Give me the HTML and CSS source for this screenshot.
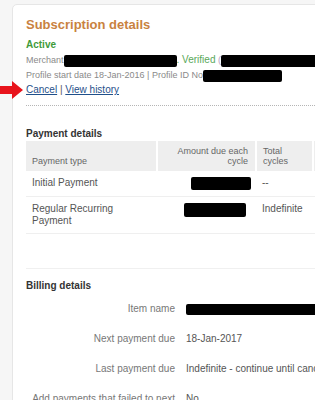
FILE: index.html
```html
<!DOCTYPE html>
<html>
<head>
<meta charset="utf-8">
<link rel="stylesheet" href="styles.css">
</head>
<body>
<div class="page">
  <svg class="arrow" width="24" height="20" viewBox="0 0 24 20"><path d="M0 6 H12 V1 L23 10 L12 19 V14 H0 Z" fill="#e8141c"/></svg>
  <div class="card">
    <h1 class="title">Subscription details</h1>
    <div class="status">Active</div>
    <div class="meta">Merchant<span class="redact r-merchant"></span><span class="green">. Verified</span> <span class="paren">(</span><span class="redact r-verified"></span></div>
    <div class="meta">Profile start date 18-Jan-2016 | Profile ID No<span class="redact r-profile"></span></div>
    <div class="links"><a href="#" class="link">Cancel</a> | <a href="#" class="link">View history</a></div>

    <div class="section-payment">
      <h2 class="heading">Payment details</h2>
      <table class="ptable">
        <colgroup>
          <col class="c1"><col class="c2"><col class="c3"><col class="c4">
        </colgroup>
        <thead>
          <tr>
            <th class="th-left">Payment type</th>
            <th class="th-right">Amount due each cycle</th>
            <th class="th-left">Total cycles</th>
            <th class="th-left"></th>
          </tr>
        </thead>
        <tbody>
          <tr>
            <td>Initial Payment</td>
            <td class="td-right"><span class="redact r-amt1"></span></td>
            <td>--</td>
            <td></td>
          </tr>
          <tr>
            <td>Regular Recurring<br>Payment</td>
            <td class="td-right"><span class="redact r-amt2"></span></td>
            <td>Indefinite</td>
            <td></td>
          </tr>
        </tbody>
      </table>
    </div>

    <div class="section-billing">
      <h2 class="heading">Billing details</h2>
      <div class="bgrid">
        <div class="blabel">Item name</div><div class="bvalue"><span class="redact r-item"></span></div>
        <div class="blabel">Next payment due</div><div class="bvalue">18-Jan-2017</div>
        <div class="blabel">Last payment due</div><div class="bvalue nowrap">Indefinite - continue until cancelled</div>
        <div class="blabel">Add payments that failed to next billing</div><div class="bvalue">No</div>
      </div>
    </div>
  </div>
</div>
</body>
</html>
```

FILE: styles.css
```css
html, body {
  margin: 0;
  padding: 0;
}
body {
  background: #f6f6f6;
  font-family: "Liberation Sans", Arial, sans-serif;
  overflow: hidden;
  width: 315px;
  height: 400px;
}
.page {
  position: relative;
  width: 315px;
  height: 400px;
  overflow: hidden;
  padding-top: 4px;
  box-sizing: border-box;
}
.arrow {
  position: absolute;
  left: 0;
  top: 80px;
}
.card {
  margin-left: 12px;
  width: 420px;
  min-height: 500px;
  background: #fff;
  border: 1px solid #e6e6e6;
  border-radius: 5px;
  padding: 12px 0 0 13px;
  box-sizing: border-box;
}
.title {
  margin: 0;
  font-size: 13px;
  line-height: 16px;
  font-weight: bold;
  color: #c9823f;
}
.status {
  margin-top: 5px;
  font-size: 10px;
  line-height: 14px;
  font-weight: bold;
  color: #3f9b3a;
}
.meta {
  font-size: 9px;
  line-height: 15px;
  color: #8a8a8a;
  white-space: nowrap;
}
.green {
  color: #5aa85a;
  font-size: 10px;
}
.paren {
  color: #b9a0c0;
}
.redact {
  display: inline-block;
  background: #000;
  vertical-align: middle;
  border-radius: 2px;
}
.r-merchant { width: 113px; height: 12px; }
.r-verified { width: 100px; height: 12px; }
.r-profile { width: 79px; height: 12px; }
.r-amt1 { width: 60px; height: 13px; }
.r-amt2 { width: 62px; height: 14px; margin-right: 5px; }
.r-item { width: 140px; height: 11px; }
.links {
  font-size: 10px;
  line-height: 14px;
  color: #555;
  padding-bottom: 8px;
  border-bottom: 1px dotted #b5b5b5;
}
.link {
  color: #1f4f8a;
  text-decoration: underline;
}
.section-payment {
  margin-top: 21px;
}
.heading {
  margin: 0;
  font-size: 10px;
  line-height: 14px;
  font-weight: bold;
  color: #333;
}
.ptable {
  border-collapse: collapse;
  table-layout: fixed;
  width: 340px;
}
.c1 { width: 131px; }
.c2 { width: 99px; }
.c3 { width: 57px; }
.c4 { width: 53px; }
.ptable th {
  background: #eeeeee;
  font-size: 9px;
  line-height: 10px;
  font-weight: normal;
  color: #666;
  padding: 5px 7px 5px 6px;
  vertical-align: bottom;
  border-right: 2px solid #fff;
  height: 20px;
}
.th-left { text-align: left; }
.th-right { text-align: right; }
.ptable td {
  font-size: 10px;
  line-height: 12px;
  color: #555;
  padding: 6px 7px 6px 6px;
  vertical-align: top;
  border-bottom: 1px solid #efefef;
}
.ptable td.td-right {
  text-align: right;
  padding-right: 5px;
}
.section-billing {
  margin-top: 34px;
  border-top: 1px solid #f0f0f0;
  padding-top: 10px;
}
.bgrid {
  display: grid;
  grid-template-columns: 149px 1fr;
  column-gap: 11px;
  margin-top: 1px;
}
.blabel {
  text-align: right;
  font-size: 10px;
  line-height: 14px;
  color: #777;
  padding: 8px 0;
}
.bvalue {
  font-size: 10px;
  line-height: 14px;
  color: #555;
  padding: 8px 0;
}
.nowrap {
  white-space: nowrap;
}
```
